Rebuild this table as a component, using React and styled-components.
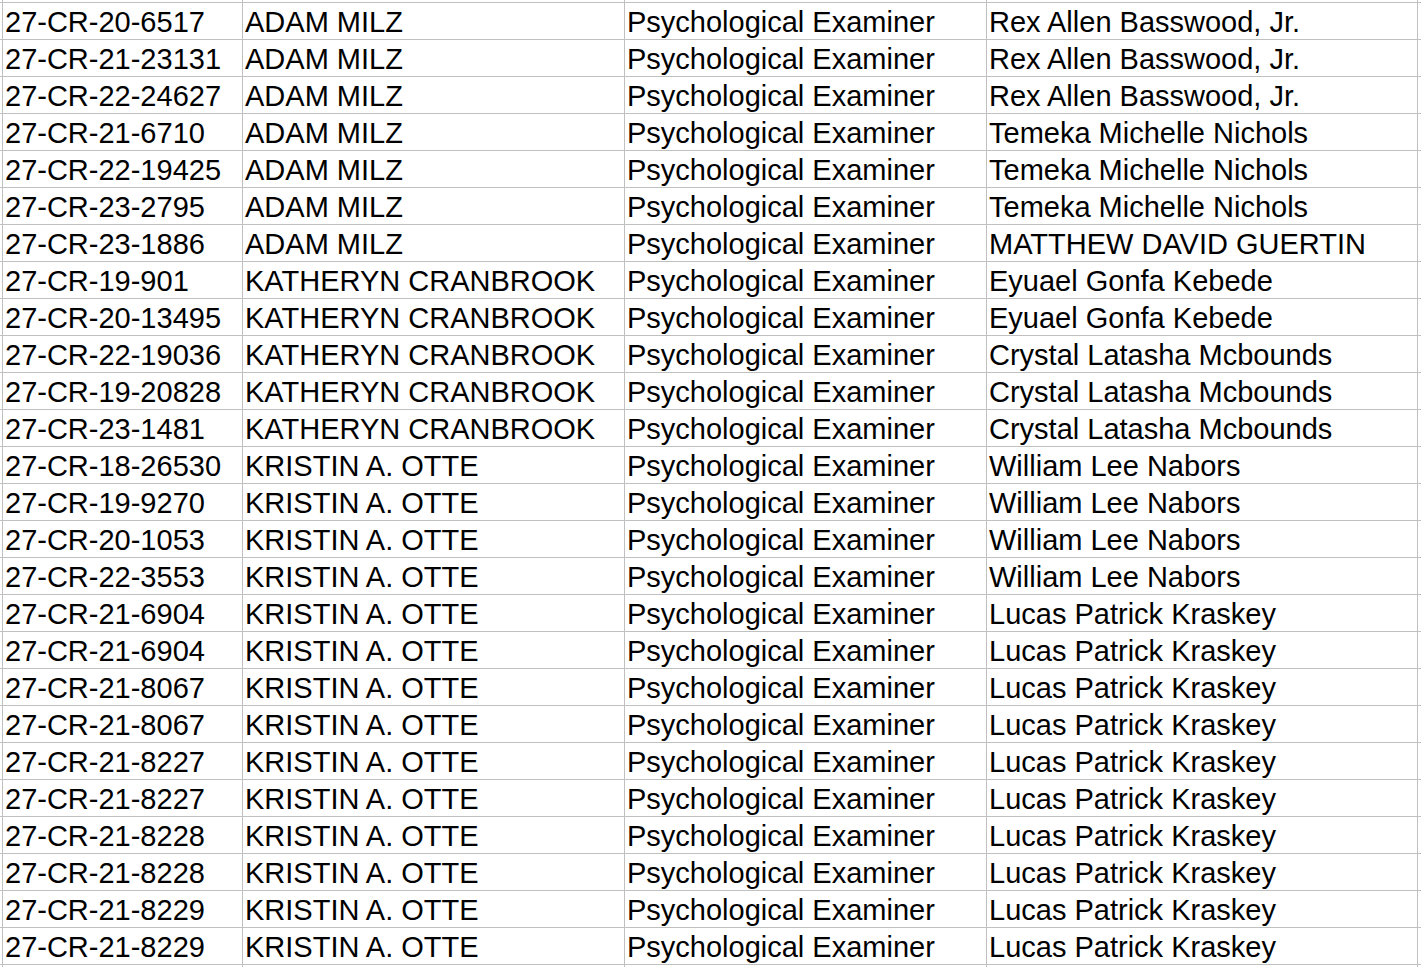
import React from "react";
import styled, { createGlobalStyle } from "styled-components";

const Global = createGlobalStyle`
  html, body { margin: 0; padding: 0; background: #ffffff; }
  body { overflow: hidden; }
`;

const Sheet = styled.div`
  display: flex;
  flex-direction: column;
  margin-top: -34px;
  font-family: "Liberation Sans", Arial, sans-serif;
  font-size: 29px;
  color: #000000;
  width: 1421px;
`;

const Row = styled.div`
  display: grid;
  grid-template-columns: 3px 240px 382px 362px 431px 1fr;
  height: 37px;
`;

const Cell = styled.div`
  box-sizing: border-box;
  height: 37px;
  border-bottom: 1px solid #c0c0c0;
  border-right: ${(p) => (p.$last ? "none" : "1px solid #c0c0c0")};
  padding-left: ${(p) => (p.$edge ? "0" : "2px")};
  line-height: 38px;
  white-space: nowrap;
  overflow: visible;
`;

const rows = [
  ["27-CR-20-6517", "ADAM MILZ", "Rex Allen Basswood, Jr."],
  ["27-CR-21-23131", "ADAM MILZ", "Rex Allen Basswood, Jr."],
  ["27-CR-22-24627", "ADAM MILZ", "Rex Allen Basswood, Jr."],
  ["27-CR-21-6710", "ADAM MILZ", "Temeka Michelle Nichols"],
  ["27-CR-22-19425", "ADAM MILZ", "Temeka Michelle Nichols"],
  ["27-CR-23-2795", "ADAM MILZ", "Temeka Michelle Nichols"],
  ["27-CR-23-1886", "ADAM MILZ", "MATTHEW DAVID GUERTIN"],
  ["27-CR-19-901", "KATHERYN CRANBROOK", "Eyuael Gonfa Kebede"],
  ["27-CR-20-13495", "KATHERYN CRANBROOK", "Eyuael Gonfa Kebede"],
  ["27-CR-22-19036", "KATHERYN CRANBROOK", "Crystal Latasha Mcbounds"],
  ["27-CR-19-20828", "KATHERYN CRANBROOK", "Crystal Latasha Mcbounds"],
  ["27-CR-23-1481", "KATHERYN CRANBROOK", "Crystal Latasha Mcbounds"],
  ["27-CR-18-26530", "KRISTIN A. OTTE", "William Lee Nabors"],
  ["27-CR-19-9270", "KRISTIN A. OTTE", "William Lee Nabors"],
  ["27-CR-20-1053", "KRISTIN A. OTTE", "William Lee Nabors"],
  ["27-CR-22-3553", "KRISTIN A. OTTE", "William Lee Nabors"],
  ["27-CR-21-6904", "KRISTIN A. OTTE", "Lucas Patrick Kraskey"],
  ["27-CR-21-6904", "KRISTIN A. OTTE", "Lucas Patrick Kraskey"],
  ["27-CR-21-8067", "KRISTIN A. OTTE", "Lucas Patrick Kraskey"],
  ["27-CR-21-8067", "KRISTIN A. OTTE", "Lucas Patrick Kraskey"],
  ["27-CR-21-8227", "KRISTIN A. OTTE", "Lucas Patrick Kraskey"],
  ["27-CR-21-8227", "KRISTIN A. OTTE", "Lucas Patrick Kraskey"],
  ["27-CR-21-8228", "KRISTIN A. OTTE", "Lucas Patrick Kraskey"],
  ["27-CR-21-8228", "KRISTIN A. OTTE", "Lucas Patrick Kraskey"],
  ["27-CR-21-8229", "KRISTIN A. OTTE", "Lucas Patrick Kraskey"],
  ["27-CR-21-8229", "KRISTIN A. OTTE", "Lucas Patrick Kraskey"],
];

function SheetRow({ caseNo = "", judge = "", role = "", person = "" }) {
  return (
    <Row>
      <Cell $edge />
      <Cell>{caseNo}</Cell>
      <Cell>{judge}</Cell>
      <Cell>{role}</Cell>
      <Cell>{person}</Cell>
      <Cell $last />
    </Row>
  );
}

export default function App() {
  return (
    <>
      <Global />
      <Sheet>
        <SheetRow />
        {rows.map(([c, j, p], i) => (
          <SheetRow key={i} caseNo={c} judge={j} role="Psychological Examiner" person={p} />
        ))}
        <SheetRow />
      </Sheet>
    </>
  );
}
